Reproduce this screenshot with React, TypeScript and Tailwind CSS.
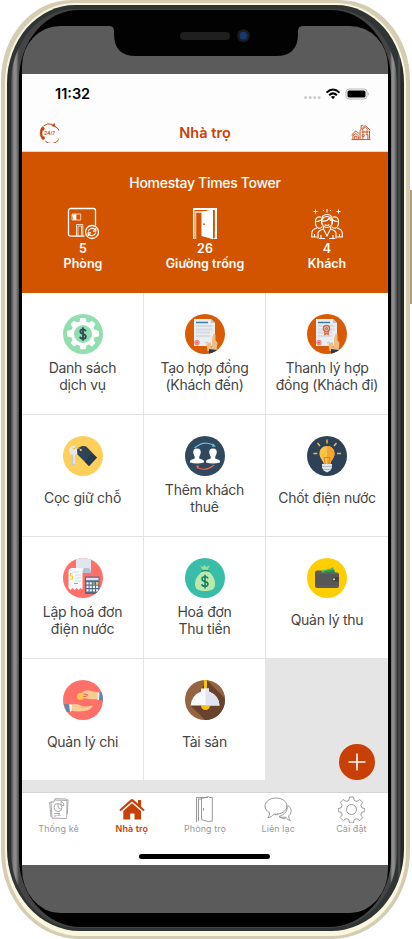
import React from "react";

function SupportIcon() {
  return (
    <svg width="20" height="20" viewBox="0 0 20 20" fill="none" stroke="#c84108" strokeWidth="1">
      <path d="M4.500 3A9 9 0 0 1 13.500 1.400M16 3.500A8.900 8.900 0 1 1 6.500 18.300" />
      <path d="M12.800 2.800 15.300.3l1 3.600Z" fill="#c84108" strokeWidth=".5" />
      <path d="M3.600 3.600C.2 6.500.2 13.500 4 17l1.900-1.400-.8-2-1.400-.2c-.8-2-.8-4.300-.1-6l1.300-.2.500-2.100Z" fill="#c84108" strokeWidth=".4" />
      <text x="10.700" y="11.900" textAnchor="middle" fontSize="4.800" fontWeight="600" fill="#c84108" stroke="none" fontFamily="Inter, sans-serif">24/7</text>
    </svg>
  );
}

function BuildingsIcon() {
  return (
    <svg width="20" height="17" viewBox="0 0 21 18" fill="none" stroke="#c84c22" strokeWidth="1">
      <path d="M9.500 16.500V6.800L15 1.600l5.200 4.800M10.500 5.500l.2-4 2.200-.2M19.500 7v9.500M.5 11.500 5 7.500l4 3M2 11v5.500M.5 16.500h20" />
      <path d="M11.500 6.500 15 3.300l3.300 3M2 12.500 5 10l3 2.500" />
      <path d="M11.800 7.500h2v2h-2zM15.800 7.500h2v2h-2zM11.800 11.300h2v2h-2zM15.800 11.300h2v5.200M12.500 16v-2M3.800 16v-3h2.400v3M8 13v3" />
    </svg>
  );
}

function StatusIcons() {
  return (
    <svg width="66" height="12" viewBox="0 0 66 12">
      <g fill="#cbcbcb">
        <circle cx="1.700" cy="9.600" r="1.500" />
        <circle cx="6.200" cy="9.600" r="1.500" />
        <circle cx="10.700" cy="9.600" r="1.500" />
        <circle cx="15.200" cy="9.600" r="1.500" />
      </g>
      <g fill="none" stroke="#000" strokeWidth="2">
        <path d="M22.500 4.600Q29-1.700 35.500 4.600" />
        <path d="M25.100 7.200Q29 3.500 32.900 7.200" />
      </g>
      <path d="M26.900 8.800Q29 7.200 31.100 8.800L29 11.200Z" />
      <rect x="42" y="1" width="21" height="10" rx="3" fill="none" stroke="#b8b8b8" />
      <rect x="43.500" y="2.500" width="18" height="7" rx="1.600" />
      <path d="M64.200 4.200q1.500 1.800 0 3.600Z" fill="#999" />
    </svg>
  );
}

function RoomIcon() {
  return (
    <svg width="34" height="34" viewBox="0 0 34 34" fill="none" stroke="#fff" strokeWidth="1.300">
      <path d="M18.500 29.200H4.500a2 2 0 0 1-2-2V3.500a2 2 0 0 1 2-2h23a2 2 0 0 1 2 2v15" />
      <path d="M6 7h8.700v6H6zM10 7v6" strokeWidth=".7" />
      <path d="M6 7.500h4V13H7.500z" fill="#fff" stroke="none" />
      <path d="M10.500 29V17.500h6.300V29M12 29V19h3.500v10" strokeWidth=".8" />
      <circle cx="26" cy="25" r="6.500" fill="#d35400" />
      <path d="M22.300 24.300a3.900 3.900 0 0 1 6.500-1.800l1-1M29.800 21.200v2.900h-2.900M29.700 25.700a3.900 3.900 0 0 1-6.500 1.800l-1 1M22.200 28.800v-2.900h2.900" strokeWidth="1.200" />
    </svg>
  );
}

function OpenDoorIcon() {
  return (
    <svg width="26" height="32" viewBox="0 0 26 32" fill="#fff">
      <path d="M1 0h24v31h-3.500v-1h1.300V2H2.500v29H1Z" />
      <path d="M9.500 4 21 1.300v30L9.500 28Z" />
      <path d="M4 3h17l-12 2H4.300v26H3V3Z" opacity=".65" />
      <circle cx="12" cy="16.200" r=".9" fill="#d35400" />
      <path d="M22.500 3v5M22.500 10v13" stroke="#d35400" strokeWidth=".7" />
    </svg>
  );
}

function GuestsIcon() {
  return (
    <svg width="32" height="32" viewBox="0 0 32 32" fill="none" stroke="#fff" strokeWidth="1.150">
      <circle cx="16" cy="14" r="5.500" />
      <path d="M10.800 13c3 .5 6-.3 7.200-2.700.8 1.500 2 2.500 3.500 2.700M11 16c-1.500-6 .5-9.500 5-9.500s6.500 3.500 5 9.500M13.700 16.500q2.300 2 4.600 0" />
      <path d="M10.200 9.200C6 7.800 3.500 11 4.500 16c1 5 5 5.200 7 2.500M4.500 13.500c2 .3 4-.3 5.500-1.500M21.800 9.200C26 7.800 28.500 11 27.500 16c-1 5-5 5.200-7 2.500M27.500 13.500c-2 .3-4-.3-5.500-1.500" />
      <path d="M7 30.500v-5.200c0-2.500 2-3.300 5.500-4.300v-2M25 30.500v-5.200c0-2.500-2-3.300-5.500-4.300v-2M12.500 21l3.500 7 3.500-7M10 27v4M22 27v4M6 20c-4 1-5.300 3-5.300 5.500V29H6M26 20c4 1 5.300 3 5.300 5.500V29H26M3.500 26v3M28.500 26v3M8 30.500h6M18 30.500h6" />
      <path d="M4.500 1.500v4M2.500 3.500h4M27.500 1.500v4M25.500 3.500h4M16 1v3.500M12 2l1 1M20 2l-1 1" strokeWidth="1" />
    </svg>
  );
}

function Disc({ color, id, children }: { color: string; id: string; children: React.ReactNode }) {
  return (
    <svg width="40" height="40" viewBox="0 0 40 40" className="block shrink-0">
      <clipPath id={id}>
        <circle cx="20" cy="20" r="20" />
      </clipPath>
      <g clipPath={`url(#${id})`}>
        <rect width="40" height="40" fill={color} />
        {children}
      </g>
    </svg>
  );
}

function ServiceIcon() {
  return (
    <Disc id="service" color="#91dfae">
      <path
        fill="#fff"
        d="M17.500 4h5l1 3.700 2.200.9 3.300-1.900 3.400 3.400-1.900 3.300.9 2.200 4.600 1.600v5l-4.600 1.300-.9 2.200 1.900 3.300-3.400 3.400-3.300-1.900-2.200.9-1 3.800h-5l-1-3.800-2.200-.9L11 32.400 7.600 29l1.900-3.300-.9-2.200L4 22.200v-5l4.600-1.600.9-2.200-1.900-3.300L11 6.700l3.300 1.900 2.200-.9Z"
      />
      <circle cx="20" cy="20" r="9" fill="#91dfae" />
      <path d="M22.700 17.300c-.3-1.300-1.200-1.900-2.700-1.900s-2.700.8-2.700 2.200c0 3.200 5.500 1.600 5.500 4.900 0 1.500-1.200 2.300-2.800 2.300-1.700 0-2.700-.8-3-2.100M20 13.300v13.400" fill="none" stroke="#2f4a5d" strokeWidth="1.800" />
    </Disc>
  );
}

function ContractIcon({ ribbon = false }: { ribbon?: boolean }) {
  return (
    <Disc id={ribbon ? "contract-end" : "contract-new"} color="#d95b04">
      <path d="M9 5h17l4 4v23H9Z" fill="#e9edf1" />
      <path d="M26 5v4h4Z" fill="#bcc4cc" />
      <path d="M11 8.500h12" stroke="#3481aa" strokeWidth="1.300" />
      <path d="M11 12h16.500M11 15.500h16.500M11 18.500h14M11 22h14" stroke="#d5dbe0" strokeWidth="2" />
      <circle cx="12" cy="28.500" r="2.300" fill="#f5b0aa" stroke="#ec6a63" strokeWidth=".8" />
      <circle cx="12" cy="28.500" r="1" fill="#e9534c" />
      <path d="m20 29 2-1 1 2 2-1" fill="none" stroke="#9ebbd2" strokeWidth=".8" />
      {ribbon && (
        <g fill="none" stroke="#db6536" strokeWidth="1.200">
          <circle cx="19.500" cy="14.500" r="3" strokeWidth="1.500" />
          <circle cx="19.500" cy="14.500" r="1" />
          <path d="M17.800 17v3.500l1.700-1.200 1.700 1.200V17" />
        </g>
      )}
      <path d="M27 34.500V25l1.500-5q1.500-.8 2 1v5l2 3-1 8h-9l-1-7 4-2Z" fill="#edbd86" />
      <path d="m24 35 8 1v4h-8Z" fill="#253b54" />
    </Disc>
  );
}

function DepositIcon() {
  return (
    <Disc id="deposit" color="#ffcf5c">
      <path d="M9.300 17h2.600v12H8.500V18Z" fill="#c2c9d0" />
      <path d="M10 17h2v11h-2Z" fill="#e0e4e8" />
      <circle cx="10.500" cy="14.500" r="4.500" fill="#e4e9ee" />
      <circle cx="10.500" cy="12.600" r="1.200" fill="#ffcf5c" />
      <path d="m15 12 4-2 4 .3 11 11.200-8 8.500L14.500 18.500 14 14Z" fill="#304457" />
      <path d="m27.500 18 6.500 3.500-8 8.500-4-4Z" fill="#25394c" />
      <path d="M11 13q3-3 7 1" fill="none" stroke="#d3a548" strokeWidth=".8" />
      <circle cx="17.800" cy="14" r="1.100" fill="#ffcf5c" />
    </Disc>
  );
}

function TenantIcon() {
  return (
    <Disc id="tenant" color="#30495e">
      <path d="M9.500 12Q19 3.500 29 9.500" fill="none" stroke="#66bfe0" strokeWidth="1.200" />
      <path d="m27.800 7.300 3.200 3.200-4 .2Z" fill="#66bfe0" />
      <path d="M29 29Q21 36 12 31.500" fill="none" stroke="#e9694f" strokeWidth="1.200" />
      <path d="m11 29.500 3.500.2-2 3Z" fill="#e9694f" />
      {[12, 28].map((x) => (
        <path
          key={x}
          transform={`translate(${x} 20)`}
          d="M0-7.500c3 0 4.200 2 3.700 4.700L2.200 1v1.500l4 1.500Q7.500 5 7 6.500Q0 8.500-7 6.500-7.500 5-6.200 4l4-1.500V1l-1.500-3.800C-4.200-5.500-3-7.500 0-7.500Z"
          fill="#fff"
        />
      ))}
    </Disc>
  );
}

function BulbIcon() {
  return (
    <Disc id="bulb" color="#2d4256">
      <path d="M20 3.500v4M10.500 7l2.500 3M29.500 7 27 10M6.300 17.500h4M30 17.500h4" stroke="#f4b83d" strokeWidth="1.500" />
      <path d="M20 10c-4.500 0-7.500 3.300-7.500 7.500 0 5 3.300 6 4.300 10.500h6.400c1-4.500 4.300-5.500 4.300-10.500C27.500 13.300 24.500 10 20 10Z" fill="#f8c447" />
      <path d="M20 10c4.500 0 7.500 3.300 7.500 7.500 0 5-3.300 6-4.300 10.500H20Z" fill="#f7a52c" />
      <path d="M17 21.500h6l-1.300 6.500M17 21.500l1.300 6.500" fill="none" stroke="#e67c22" strokeWidth="1" />
      <path d="M15 28h10v3.500l-1.500 3-3.500 2-3.500-2-1.500-3Z" fill="#e0e5e8" />
      <path d="M15 30.500h10M16 33.500h8" stroke="#a4b2bd" strokeWidth=".8" />
    </Disc>
  );
}

function BillIcon() {
  return (
    <Disc id="bill" color="#ff7069">
      <path d="M13 0h15v15H13Z" fill="#e1e5ed" />
      <path d="M18 10h6q4 0 4 5H18Z" fill="#b7c0d2" />
      <path d="M9 10h12q-2 1-1.500 9v12.500l-2-1.500-2 2-2-2-2 2-2-2-2 2-2-2V14q0-4 3.500-4Z" fill="#f7fafc" />
      <path d="M9.500 14h6.500M12 17h6M12 20h6M12 23h6" stroke="#c4dfd2" strokeWidth=".9" />
      <path d="M11 25.500h4" stroke="#ff7c72" />
      <path d="M9.500 15.500H7.500v2.500h2v3H7" fill="none" stroke="#f6c943" strokeWidth="1.100" />
      <rect x="22" y="18.500" width="14.500" height="17.500" fill="#57688b" />
      <path d="M23 19.800h12.500v2.500H23z" fill="#dce4ef" />
      {[24.500, 27.700, 30.900, 34.100].map((x) => (
        <path key={x} d={`M${x} 24.200v2.200M${x} 27.700v2.200M${x} 31.200v2.200`} stroke="#edf3fa" strokeWidth="2.200" />
      ))}
      <path d="M29.800 25.300H32" stroke="#50ac62" strokeWidth="2.200" />
      <path d="M33 25.300h2.200" stroke="#f7c537" strokeWidth="2.200" />
    </Disc>
  );
}

function MoneyBagIcon() {
  return (
    <Disc id="money-bag" color="#37bda8">
      <path d="m15 7.500 3 1.500 1-2 2.500 2L25 7l-2.500 5.500h-4.500Z" fill="#9bdc98" />
      <path d="M18 13h5c4 3 7 7.500 7 13 0 5-3 7-10 7s-10-2-10-7c0-5.500 4-10 8-13Z" fill="#bce9aa" />
      <path d="M16.500 13.500q4-2 8 0" fill="none" stroke="#188d75" strokeWidth="1.300" />
      <path d="M23 20.500c-.4-1.200-1.400-1.700-3-1.700s-3 .8-3 2.200c0 3.300 6 1.700 6 5 0 1.500-1.300 2.300-3 2.300-1.900 0-3-.8-3.300-2M20 16.700v13.700" fill="none" stroke="#13806b" strokeWidth="1.600" />
    </Disc>
  );
}

function WalletIcon() {
  return (
    <Disc id="wallet" color="#ffce00">
      <path d="m13 13 10.500-2.500L26 9l2.500 6-13 3Z" fill="#4dba69" />
      <path d="m17 13 10-1.500 1 3-9 2Z" fill="#259951" />
      <path d="M10 12.500h4.500v2H30q2 0 2 2V28q0 2-2 2H10q-2 0-2-2V14.500q0-2 2-2Z" fill="#575757" />
      <path d="M9 13.500h4M9.500 15.500H31M9.500 28.800H31" stroke="#7b7b7b" strokeWidth=".5" strokeDasharray="1.500 1" />
      <path d="M32 19h-4.500q-2 0-2 2.200t2 2.300H32" fill="#444" />
      <circle cx="27" cy="21.200" r="1" fill="#ffe27b" />
    </Disc>
  );
}

function ExpenseIcon() {
  return (
    <Disc id="expense" color="#ff7069">
      <path d="m16 14.500 5.500-3.800q3-1 6.500.3l7 1.500v6.800q-7 .3-12-.8l-5-1Z" fill="#f9cb91" />
      <circle cx="17.500" cy="16.500" r="3.600" fill="#fbc44c" />
      <path d="m20.500 13.800 4 1-1.500 1.700h-3" fill="none" stroke="#eb7561" strokeWidth="1.200" />
      <path d="M34.500 12.500H37V20h-2.500Z" fill="#eaf1f7" />
      <path d="M36.500 12H40v9l-4-1Z" fill="#6984a9" />
      <path d="M8 24.500q6-1.500 11 1.700l3 .3 8-1q-2 4.500-8.500 5.500-7 1-13.500-.5Z" fill="#f9cb91" />
      <path d="M18 27.500 26 26.500" stroke="#dfa66e" strokeWidth=".6" />
      <path d="m1 24 5 .3L8.500 32H3Z" fill="#6984a9" />
      <path d="m6 24.300 2.800.2V31L7 32Z" fill="#eaf1f7" />
    </Disc>
  );
}

function LampIcon() {
  return (
    <Disc id="lamp" color="#966442">
      <path d="m22 0 18 18v22H20L6 26Z" fill="#67422d" />
      <path d="m22 0 18 8v10Z" fill="#966442" />
      <path d="M19 0h3v9h-3Z" fill="#f9c410" />
      <path d="M16 25.500h9a4.500 4.500 0 0 1-9 0Z" fill="#f9bd10" />
      <path d="M16 8.500h8v3q10 4 10.500 14h-29Q7 15 16 11.500Z" fill="#f9fafc" />
      <path d="M20.500 8.500H24v3q10 4 10.500 14h-14Z" fill="#e1e4f0" />
    </Disc>
  );
}

function StatsTabIcon() {
  return (
    <svg width="20" height="22" viewBox="0 0 20 22" fill="none" stroke="#aaa" strokeWidth="1">
      <path d="m3 4-2.400.4L2 19M5 2l13 .5-.3 18-14.700-.4L2 4h3ZM6 2V.7L17 1l2 1-.6 14" />
      <circle cx="9" cy="9.500" r="4" />
      <path d="M9 5.500v4l3.500 2M12 3.500a4 4 0 0 1 3 4h-3ZM5 15.500h6M5 18h2v-1M9 18v-1h2v1" />
    </svg>
  );
}

function HomeTabIcon() {
  return (
    <svg width="26" height="21" viewBox="0 0 26 21" fill="#c84108">
      <path d="M11.700.6q1.300-1.200 2.600 0l4.700 4.100V1h3v6.500l3.700 3.300-1.300 1.500L13 2.600 1.600 12.300.3 10.800Z" />
      <path d="m13 4.200 9 7.700v8.500h-6.500v-6h-4.300v6H4.300v-8.500Z" />
    </svg>
  );
}

function DoorTabIcon() {
  return (
    <svg width="19" height="27" viewBox="0 0 19 27" fill="none" stroke="#999" strokeWidth="1">
      <path d="M1.500 26V1.500H13M3.500 25V3H7" strokeWidth="1.100" />
      <path d="m6.500 2.500 7.500-2M6.500 2.500v21.200l7.500 2.100M14 1.500h3.300v23.700H14M8.500 12v2.500" />
    </svg>
  );
}

function ChatTabIcon() {
  return (
    <svg width="28" height="25" viewBox="0 0 28 25" fill="none" stroke="#999" strokeWidth="1">
      <path d="M12 1C6 1 1 4.500 1 9c0 3 1.800 5.300 4.500 6.700.2 2-.5 3.500-1.700 4.800 2.700-.2 4.700-1.400 6-3.500 7 1 13.200-3 13.200-8 0-4.500-5-8-11-8Z" />
      <path d="M22.500 8c2.500 4.500-1.500 9.500-7.500 11.500 2.200 1 4.500 1.100 6.500.5 1.500 2.200 3 3.300 5 3.500-1.400-1.400-1.800-3-1.700-4.800 3.500-3.200 3-7.700-.8-10.200M15 19.500c2.500 2 4.500 2.300 6.500 2.200M14 17c-1 .5-2 .8-3 .8" />
    </svg>
  );
}

function SettingsTabIcon() {
  return (
    <svg width="27" height="27" viewBox="0 0 27 27" fill="none" stroke="#999" strokeWidth="1" strokeLinejoin="round">
      <circle cx="13.500" cy="13.500" r="5" />
      <path d="M11.500 1h4l.7 3.400 2.700 1.100 2.900-2 2.900 2.900-1.900 2.900 1 2.500 3 .7v3l-3 .8-1 2.500 1.900 2.900-2.900 2.900-2.900-2-2.700 1.100-.7 3.300h-4l-.7-3.300-2.700-1.100-2.900 2-2.900-2.900 1.900-2.900-1-2.500-3-.8v-3l3-.7 1-2.500-1.900-2.900 2.900-2.900 2.900 2 2.700-1.100Z" />
    </svg>
  );
}

const summary = [
  { value: "5", label: "Phòng", icon: <RoomIcon /> },
  { value: "26", label: "Giường trống", icon: <OpenDoorIcon /> },
  { value: "4", label: "Khách", icon: <GuestsIcon /> },
];

const actions = [
  { lines: ["Danh sách", "dịch vụ"], icon: <ServiceIcon /> },
  { lines: ["Tạo hợp đồng", "(Khách đến)"], icon: <ContractIcon /> },
  { lines: ["Thanh lý hợp", "đồng (Khách đi)"], icon: <ContractIcon ribbon /> },
  { lines: ["Cọc giữ chỗ"], icon: <DepositIcon /> },
  { lines: ["Thêm khách", "thuê"], icon: <TenantIcon /> },
  { lines: ["Chốt điện nước"], icon: <BulbIcon /> },
  { lines: ["Lập hoá đơn", "điện nước"], icon: <BillIcon /> },
  { lines: ["Hoá đơn", "Thu tiền"], icon: <MoneyBagIcon /> },
  { lines: ["Quản lý thu"], icon: <WalletIcon /> },
  { lines: ["Quản lý chi"], icon: <ExpenseIcon /> },
  { lines: ["Tài sản"], icon: <LampIcon /> },
];

const tabs = [
  { label: "Thống kê", icon: <StatsTabIcon /> },
  { label: "Nhà trọ", icon: <HomeTabIcon />, active: true },
  { label: "Phòng trọ", icon: <DoorTabIcon /> },
  { label: "Liên lạc", icon: <ChatTabIcon /> },
  { label: "Cài đặt", icon: <SettingsTabIcon /> },
];

function Notch() {
  return (
    <div className="absolute left-[109px] top-[26px] h-[30px] w-[194px]">
      <svg width="194" height="30" viewBox="0 0 194 30" className="block">
        <path d="M0-1H194V0q-5 0-5 5v3q0 22-22 22H27Q5 30 5 8V5Q5 0 0 0Z" fill="#020202" />
        <rect x="71" y="6" width="50" height="8" rx="4" fill="#1f1f1f" />
        <circle cx="134.500" cy="9.700" r="6.500" fill="#171b1d" />
        <circle cx="134.500" cy="9.700" r="3.900" fill="#18366f" />
      </svg>
    </div>
  );
}

function AppScreen() {
  return (
    <div className="relative flex h-[791px] flex-col bg-white">
      <header className="h-[78px] border-b border-[#ddd] bg-[#fdfdfd]">
        <div className="flex h-[40px] items-center justify-between pl-[33px] pr-[18px]">
          <span className="text-[14.500px] font-semibold text-black">11:32</span>
          <StatusIcons />
        </div>
        <div className="flex h-[37px] items-center justify-between pl-[17px] pr-[17px]">
          <SupportIcon />
          <h1 className="text-[14.500px] font-semibold tracking-[0.050px] text-[#c84108]">Nhà trọ</h1>
          <BuildingsIcon />
        </div>
      </header>

      <section className="h-[141px] bg-[#d35400] pt-[21px] text-white">
        <h2 className="text-center text-[14px] font-medium leading-[20px] tracking-[-0.300px]">Homestay Times Tower</h2>
        <div className="mt-[13px] grid grid-cols-3">
          {summary.map((s) => (
            <div key={s.label} className="flex flex-col items-center text-[12.500px] font-semibold leading-[15px]">
              <div className="flex h-[35px] items-center">{s.icon}</div>
              <span>{s.value}</span>
              <span className="whitespace-nowrap">{s.label}</span>
            </div>
          ))}
        </div>
      </section>

      <main className="h-[499px] bg-[#e5e5e5]">
        <div className="grid grid-cols-3">
          {actions.map((a, i) => (
            <div
              key={a.lines[0]}
              className={`flex flex-col items-center border-[#e3e3e3] bg-white pt-[21px] ${i % 3 < 2 && i !== 10 ? "border-r" : ""} ${i < 9 ? "h-[122px] border-b" : "h-[121px]"} ${i === 10 ? "mr-px" : ""}`}
            >
              {a.icon}
              <div className="mt-[6px] flex h-[33px] flex-col justify-center text-center text-[14px] leading-[16.500px] tracking-[-0.250px] text-[#454545]">
                {a.lines.map((line) => (
                  <span key={line} className="whitespace-nowrap">{line}</span>
                ))}
              </div>
            </div>
          ))}
        </div>
      </main>

      <nav className="grid h-[73px] grid-cols-5 border-t border-[#d5d5d5] bg-white">
        {tabs.map((t) => (
          <div key={t.label} className={`flex flex-col items-center pt-[2px] text-[9px] leading-[11px] tracking-[0.080px] ${t.active ? "font-semibold text-[#c84108]" : "text-[#999]"}`}>
            <div className="flex h-[28px] items-center">{t.icon}</div>
            <span>{t.label}</span>
          </div>
        ))}
      </nav>

      <button aria-label="Thêm" className="absolute left-[317px] top-[669.500px] flex size-[36px] items-center justify-center rounded-full bg-[#c94006]">
        <svg width="18" height="18" viewBox="0 0 18 18" stroke="#fff" strokeWidth="1.600">
          <path d="M9 .500v17M.500 9h17" />
        </svg>
      </button>
      <div className="absolute bottom-[6px] left-[117px] h-[5px] w-[131px] rounded-full bg-black" />
    </div>
  );
}

export default function App() {
  return (
    <div className="relative flex h-[939px] w-[412px] bg-white pl-px font-['Inter','Liberation_Sans',sans-serif]">
      <div className="absolute left-[409px] top-[190px] h-[114px] w-[3px] bg-[#b2a376]" />
      <div className="relative h-[939px] w-[409px] rounded-t-[70px_80px] rounded-b-[78px_88px] bg-[#d4cdb4] pb-[3px] pl-[4px] pr-[4px] pt-[3px]">
        <div className="h-[933px] w-[401px] rounded-t-[70px_80px] rounded-b-[75px_84px] bg-[#fbf7df] pb-[5px] pl-[2px] pr-[2px] pt-[2px]">
          <div className="h-[926px] w-[397px] rounded-t-[68px_78px] rounded-b-[73px_82px] bg-[linear-gradient(90deg,#252b2b_0,#2f3535_4px,#2f3535_391px,#555_392px,#252729_394px,#252729_100%)] pl-[4px] pr-[6px] pt-[4px]">
            <div className="h-[919px] w-[386px] rounded-t-[64px_74px] rounded-b-[68px_76px] bg-[linear-gradient(90deg,#444_0,#8b8b8b_3px,#8b8b8b_5px,#444_8px,#444_379px,#8c8c8c_381px,#8c8c8c_383px,#444_100%)] pl-[8px] pr-[6px] pt-px">
              <div className="h-[917px] w-[372px] rounded-t-[60px_70px] rounded-b-[62px_70px] bg-[#020202] pl-[3px] pt-[16px]">
                <div className="h-[887px] w-[366px] overflow-hidden rounded-t-[38px_40px] rounded-b-[38px_44px] bg-[#5b5b5b] pt-[48px]">
                  <AppScreen />
                </div>
              </div>
            </div>
          </div>
        </div>
      </div>
      <Notch />
    </div>
  );
}
